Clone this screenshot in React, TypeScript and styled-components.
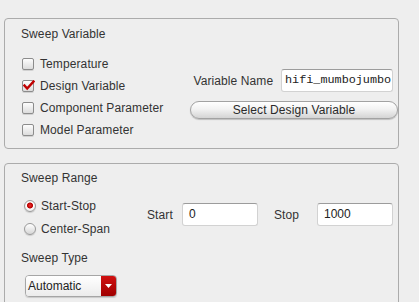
import React from 'react';
import styled, { createGlobalStyle } from 'styled-components';

const GlobalStyle = createGlobalStyle`
  html, body {
    margin: 0;
    padding: 0;
    background: #eeeeee;
    overflow: hidden;
  }
  body {
    font-family: 'Liberation Sans', Arial, sans-serif;
    font-size: 12px;
    color: #333333;
  }
`;

const Page = styled.div`
  width: 399px;
  height: 302px;
  padding: 18px 0 0 4px;
  box-sizing: border-box;
  overflow: hidden;
`;

const Panel = styled.div<{ $height: number; $gap?: number; $top: number }>`
  height: ${(p) => p.$height}px;
  margin-bottom: ${(p) => p.$gap || 0}px;
  border: 1px solid #ababab;
  border-radius: 4px;
  padding: ${(p) => p.$top}px 0 0 16px;
  box-sizing: border-box;
`;

const Title = styled.div<{ $after: number }>`
  line-height: 16px;
  height: 16px;
  margin-bottom: ${(p) => p.$after}px;
  letter-spacing: 0.1px;
`;

const Body = styled.div<{ $left: number }>`
  display: grid;
  grid-template-columns: ${(p) => p.$left}px auto;
  align-items: start;
`;

const Column = styled.div<{ $top?: number }>`
  display: flex;
  flex-direction: column;
  margin-top: ${(p) => p.$top || 0}px;
`;

const OptionRow = styled.label<{ $h: number }>`
  display: flex;
  align-items: center;
  height: ${(p) => p.$h}px;
  letter-spacing: 0.1px;
`;

const Box = styled.span`
  width: 10px;
  height: 10px;
  margin: 0 6px 0 1px;
  border: 1px solid #8c8c8c;
  border-radius: 2px;
  background: linear-gradient(#fdfdfd, #dcdcdc);
  box-shadow: 0 1px 0 rgba(0, 0, 0, 0.12);
  position: relative;
  flex: none;
`;

const Radio = styled.span<{ $on?: boolean }>`
  width: 10px;
  height: 10px;
  margin: 0 5px 0 3px;
  border: 1px solid #9a9a9a;
  border-radius: 50%;
  background: ${(p) =>
    p.$on
      ? 'radial-gradient(circle at 50% 45%, #f03030 0, #b80000 2.6px, #ffffff 3.4px, #e4e4e4 6px)'
      : 'linear-gradient(#ffffff, #d6d6d6)'};
  box-shadow: 0 1px 1px rgba(0, 0, 0, 0.15);
  flex: none;
`;

const Check = () => (
  <svg width="12" height="11" viewBox="0 0 12 11" style={{ position: 'absolute', left: 0, top: -1 }}>
    <path d="M1.5 5.5 L4.2 8.5 L10.5 1.5" fill="none" stroke="#c00000" strokeWidth="2.4" strokeLinecap="square" />
  </svg>
);

const FieldRow = styled.div`
  display: flex;
  align-items: center;
`;

const FieldLabel = styled.span<{ $w: number; $lead?: number }>`
  width: ${(p) => p.$w}px;
  margin-left: ${(p) => p.$lead || 0}px;
  letter-spacing: 0.1px;
`;

const TextInput = styled.div<{ $w: number; $mono?: boolean }>`
  width: ${(p) => p.$w}px;
  height: 23px;
  box-sizing: border-box;
  background: #ffffff;
  border: 1px solid #d2d2d2;
  border-top-color: #9c9c9c;
  border-radius: 3px;
  padding-left: ${(p) => (p.$mono ? 3 : 6)}px;
  line-height: 21px;
  font-family: ${(p) => (p.$mono ? "'Liberation Mono', 'Courier New', monospace" : 'inherit')};
  font-size: ${(p) => (p.$mono ? '11.8px' : '12px')};
  color: #222;
  white-space: nowrap;
  overflow: hidden;
`;

const PillButton = styled.div`
  width: 208px;
  height: 18px;
  margin-top: 9px;
  box-sizing: border-box;
  border: 1px solid #a2a2a2;
  border-radius: 9px;
  background: linear-gradient(#ffffff 0%, #f2f2f2 45%, #d4d4d4 100%);
  box-shadow: 0 1px 1px rgba(0, 0, 0, 0.2);
  display: flex;
  align-items: center;
  justify-content: center;
  letter-spacing: 0.1px;
  color: #2a2a2a;
`;

const Dropdown = styled.div`
  display: flex;
  width: 92px;
  height: 22px;
  box-sizing: border-box;
  margin-left: 4px;
  border: 1px solid #a6a6a6;
  border-radius: 4px;
  overflow: hidden;
  box-shadow: 0 1px 1px rgba(0, 0, 0, 0.15);
`;

const DropValue = styled.div`
  flex: 1;
  padding-left: 2px;
  line-height: 20px;
  background: linear-gradient(#ffffff, #ececec);
  color: #222;
`;

const DropArrow = styled.div`
  width: 15px;
  background: linear-gradient(#d01010, #a00000);
  display: flex;
  align-items: center;
  justify-content: center;
`;

const App = () => (
  <Page>
    <GlobalStyle />
    <Panel $height={131} $gap={14} $top={7}>
      <Title $after={11}>Sweep Variable</Title>
      <Body $left={169}>
        <Column>
          <OptionRow $h={22}>
            <Box />
            Temperature
          </OptionRow>
          <OptionRow $h={22}>
            <Box>
              <Check />
            </Box>
            Design Variable
          </OptionRow>
          <OptionRow $h={22}>
            <Box />
            Component Parameter
          </OptionRow>
          <OptionRow $h={22}>
            <Box />
            Model Parameter
          </OptionRow>
        </Column>
        <Column $top={16}>
          <FieldRow>
            <FieldLabel $w={91}>&nbsp;Variable Name</FieldLabel>
            <TextInput $w={112} $mono>
              hifi_mumbojumbo
            </TextInput>
          </FieldRow>
          <PillButton>Select Design Variable</PillButton>
        </Column>
      </Body>
    </Panel>
    <Panel $height={160} $top={6}>
      <Title $after={8}>Sweep Range</Title>
      <Body $left={126}>
        <Column>
          <OptionRow $h={23}>
            <Radio $on />
            Start-Stop
          </OptionRow>
          <OptionRow $h={23}>
            <Radio />
            Center-Span
          </OptionRow>
        </Column>
        <Column $top={9}>
          <FieldRow>
            <FieldLabel $w={35}>Start</FieldLabel>
            <TextInput $w={76}>0</TextInput>
            <FieldLabel $w={43} $lead={16}>
              Stop
            </FieldLabel>
            <TextInput $w={76}>1000</TextInput>
          </FieldRow>
        </Column>
      </Body>
      <Title $after={9} style={{ marginTop: 10 }}>
        Sweep Type
      </Title>
      <Dropdown>
        <DropValue>Automatic</DropValue>
        <DropArrow>
          <svg width="7" height="4" viewBox="0 0 7 4">
            <path d="M0 0 L7 0 L3.5 4 Z" fill="#ffffff" />
          </svg>
        </DropArrow>
      </Dropdown>
    </Panel>
  </Page>
);

export default App;
